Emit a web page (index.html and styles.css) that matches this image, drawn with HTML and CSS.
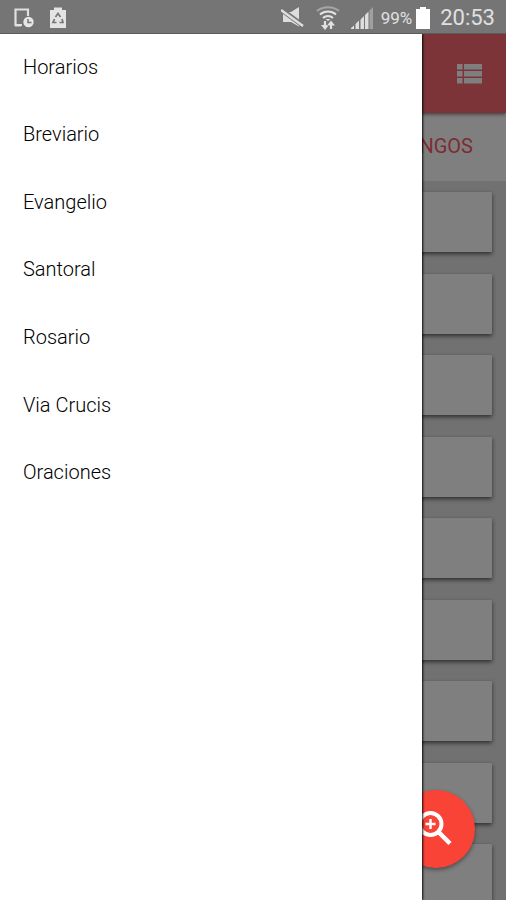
FILE: index.html
```html
<!DOCTYPE html>
<html lang="es">
<head>
<meta charset="utf-8">
<meta name="viewport" content="width=device-width, initial-scale=1">
<title>Horarios</title>
<link rel="stylesheet" href="styles.css">
</head>
<body>
<div class="screen">
  <header class="status">
    <div class="status-group status-left">
      <svg width="22" height="22" viewBox="0 0 22 22" aria-hidden="true">
        <path d="M9 18H2.500V2.500H15V9" fill="none" stroke="#e0e0e0" stroke-width="2.200"/>
        <path d="M2 17h6v2.500H2z" fill="#e0e0e0"/>
        <circle cx="15.500" cy="15" r="5.200" fill="#e6e6e6"/>
        <path d="M15 12V15.500H18.500" fill="none" stroke="#757575" stroke-width="1.500"/>
      </svg>
      <svg width="18" height="22" viewBox="0 0 18 22" aria-hidden="true">
        <path d="M1 3h4V0.500h8V3h4v18H1z" fill="#e4e4e4"/>
        <path d="M6.500 10L9 6.500l2.500 3.500M13 12l1 3.500h-3.500M7.500 15.500H4L5.500 12" fill="none" stroke="#777" stroke-width="1.700"/>
      </svg>
    </div>
    <div class="status-group status-right">
      <svg width="24" height="22" viewBox="0 0 24 22" aria-hidden="true">
        <path d="M2 5h8l8-5v19.500L10 15H2z" fill="#dedede"/>
        <path d="M0 2.500L22 18.500" stroke="#757575" stroke-width="5"/>
        <path d="M0 3L22 19" stroke="#dedede" stroke-width="2.600"/>
      </svg>
      <svg class="wifi" width="24" height="24" viewBox="0 0 24 24" fill="none" aria-hidden="true">
        <path d="M1 5C7 0 17 0 23 5" stroke="#a5a5a5" stroke-width="2"/>
        <path d="M4 8.500c4.500-4 11.500-4 16 0M7 12c3-2.600 7-2.600 10 0" stroke="#e2e2e2" stroke-width="2.200"/>
        <path d="M9.500 13h5l-2.500 2z" fill="#e2e2e2"/>
        <path d="M9 15v6M15 23v-6" stroke="#e2e2e2" stroke-width="2.200"/>
        <path d="M5 19h8l-4 5zM11 19.500h8L15 14.500z" fill="#e2e2e2"/>
      </svg>
      <svg class="signal" width="22" height="22" viewBox="0 0 22 22" aria-hidden="true">
        <path d="M0 21l3-2.500V22H0zM4.500 17l3.500-3.500V22H4.500zM9.500 12.500L13 9v13H9.500zM14 8l3.500-3.500V22H14z" fill="#dedede"/>
        <path d="M18.500 3.500L22 0v22h-3.500z" fill="#a0a0a0"/>
      </svg>
      <span class="percent">99%</span>
      <svg class="battery" width="14" height="24" viewBox="0 0 14 24" aria-hidden="true">
        <path d="M0 3h4V1h6v2h4v20H0z" fill="#fff"/>
      </svg>
      <time class="clock">20:53</time>
    </div>
  </header>

  <div class="stage">
    <main class="page">
      <div class="toolbar">
        <button class="icon-button" type="button" aria-label="Lista">
          <svg width="25" height="20" viewBox="0 0 25 20" aria-hidden="true">
            <path d="M0 0h5.500v5.500H0zM7 0h18v5.500H7zM0 7h5.500v5.500H0zM7 7h18v5.500H7zM0 14h5.500v5.500H0zM7 14h18v5.500H7z" fill="#fff"/>
          </svg>
        </button>
      </div>
      <nav class="tabs"><a class="tab" href="#domingos">DOMINGOS</a></nav>
      <div class="cards">
        <article class="card"></article>
        <article class="card"></article>
        <article class="card"></article>
        <article class="card"></article>
        <article class="card"></article>
        <article class="card"></article>
        <article class="card"></article>
        <article class="card"></article>
        <article class="card"></article>
      </div>
    </main>
    <div class="scrim"></div>
    <button class="fab" type="button" aria-label="Buscar">
      <svg width="36" height="36" viewBox="0 0 36 36" fill="none" stroke="#fff" aria-hidden="true">
        <circle cx="12.500" cy="13" r="11" stroke-width="4"/>
        <path d="M20.500 21L32 32.500" stroke-width="4.500"/>
        <path d="M12.500 8v10M7.500 13h10" stroke-width="2.400"/>
      </svg>
    </button>
    <nav class="drawer" aria-label="Menú">
      <ul class="menu">
        <li><a href="#horarios">Horarios</a></li>
        <li><a href="#breviario">Breviario</a></li>
        <li><a href="#evangelio">Evangelio</a></li>
        <li><a href="#santoral">Santoral</a></li>
        <li><a href="#rosario">Rosario</a></li>
        <li><a href="#via-crucis">Via Crucis</a></li>
        <li><a href="#oraciones">Oraciones</a></li>
      </ul>
    </nav>
  </div>
</div>
</body>
</html>
```
FILE: styles.css
```css
* {
  box-sizing: border-box;
}

body {
  margin: 0;
  font-family: Roboto, "Liberation Sans", sans-serif;
}

a {
  color: inherit;
  text-decoration: none;
}

button {
  padding: 0;
  border: 0;
  background: none;
}

svg {
  display: block;
  flex: none;
}

.screen {
  display: flex;
  flex-direction: column;
  height: 100vh;
  overflow: hidden;
}

.status {
  display: flex;
  flex: none;
  justify-content: space-between;
  height: 34px;
  padding: 3px 11px 0 13px;
  border-bottom: 1px solid #5c5c5c;
  background: #757575;
  color: #e0e0e0;
}

.status-group {
  display: flex;
  align-items: center;
}

.status-left {
  gap: 14px;
}

.wifi {
  margin-left: 11px;
}

.signal {
  margin: 0 8px 0 11px;
}

.percent {
  font-size: 17px;
}

.battery {
  margin: 0 10px 0 4px;
}

.clock {
  font-size: 22px;
  line-height: 30px;
}

.stage {
  position: relative;
  flex: 1;
  min-height: 0;
  overflow: hidden;
}

.page {
  height: 100%;
  overflow: hidden;
  background: #e2e2e2;
}

.toolbar {
  position: relative;
  display: flex;
  align-items: center;
  justify-content: flex-end;
  height: 79px;
  padding-right: 24px;
  background: #fb6872;
  box-shadow: 0 1px 4px rgba(0, 0, 0, 0.6);
}

.tabs {
  display: flex;
  align-items: center;
  justify-content: flex-end;
  height: 68px;
  padding: 0 33px 2px 0;
  background: #fff;
  color: #f85a68;
  font-size: 20px;
}

.cards {
  display: flex;
  flex-direction: column;
  justify-content: space-between;
  height: 723px;
  padding: 11px 14px 0;
}

.card {
  height: 60px;
  border-radius: 1px;
  background: #fff;
  box-shadow: 0 2px 4px rgba(0, 0, 0, 0.6);
}

.scrim {
  position: absolute;
  inset: 0;
  background: rgba(0, 0, 0, 0.5);
}

.fab {
  position: absolute;
  right: 31px;
  bottom: 32px;
  display: grid;
  place-items: center;
  width: 78px;
  height: 78px;
  border-radius: 50%;
  background: #f94336;
  box-shadow: 0 2px 4px rgba(0, 0, 0, 0.4);
}

.drawer {
  position: absolute;
  top: 0;
  right: 84px;
  bottom: 0;
  left: 0;
  background: #fff;
  box-shadow: 1px 0 2px rgba(0, 0, 0, 0.9);
}

.menu {
  display: grid;
  grid-auto-rows: 1fr;
  height: 473px;
  margin: 0;
  padding: 0;
  list-style: none;
  color: #000;
  font-size: 20px;
  font-weight: 300;
}

.menu a {
  display: flex;
  align-items: center;
  height: 100%;
  padding: 0 23px 2px;
}
```
